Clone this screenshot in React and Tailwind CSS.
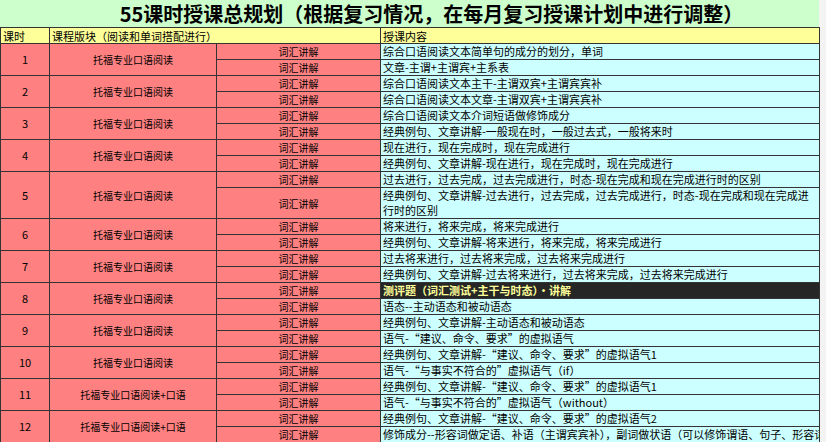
const rows = [
  ["1", "托福专业口语阅读", ["综合口语阅读文本简单句的成分的划分，单词", "文章-主谓+主谓宾+主系表"]],
  ["2", "托福专业口语阅读", ["综合口语阅读文本主干-主谓双宾+主谓宾宾补", "综合口语阅读文本文章-主谓双宾+主谓宾宾补"]],
  ["3", "托福专业口语阅读", ["综合口语阅读文本介词短语做修饰成分", "经典例句、文章讲解-一般现在时，一般过去式，一般将来时"]],
  ["4", "托福专业口语阅读", ["现在进行，现在完成时，现在完成进行", "经典例句、文章讲解-现在进行，现在完成时，现在完成进行"]],
  ["5", "托福专业口语阅读", ["过去进行，过去完成，过去完成进行，时态-现在完成和现在完成进行时的区别", "经典例句、文章讲解-过去进行，过去完成，过去完成进行，时态-现在完成和现在完成进行时的区别"]],
  ["6", "托福专业口语阅读", ["将来进行，将来完成，将来完成进行", "经典例句、文章讲解-将来进行，将来完成，将来完成进行"]],
  ["7", "托福专业口语阅读", ["过去将来进行，过去将来完成，过去将来完成进行", "经典例句、文章讲解-过去将来进行，过去将来完成，过去将来完成进行"]],
  ["8", "托福专业口语阅读", ["测评题（词汇测试+主干与时态）·讲解", "语态--主动语态和被动语态"]],
  ["9", "托福专业口语阅读", ["经典例句、文章讲解-主动语态和被动语态", "语气-“建议、命令、要求”的虚拟语气"]],
  ["10", "托福专业口语阅读", ["经典例句、文章讲解-“建议、命令、要求”的虚拟语气1", "语气-“与事实不符合的”虚拟语气（if）"]],
  ["11", "托福专业口语阅读+口语", ["经典例句、文章讲解-“建议、命令、要求”的虚拟语气1", "语气-“与事实不符合的”虚拟语气（without）"]],
  ["12", "托福专业口语阅读+口语", ["经典例句、文章讲解-“建议、命令、要求”的虚拟语气2", "修饰成分--形容词做定语、补语（主谓宾宾补），副词做状语（可以修饰谓语、句子、形容词"]],
];

const b = "border border-[#333] ";

export default function App() {
  return (
    <div className="w-[826px] h-[442px] overflow-hidden bg-[#f3f3f3] text-[11px] text-black" style={{ fontFamily: '"Noto Sans CJK SC", "Noto Sans", sans-serif' }}>
      <div className="w-[819px] h-[27px] bg-[#ccffcc] flex items-center justify-center pl-[44px] text-[20px] font-bold leading-none">
        55课时授课总规划（根据复习情况，在每月复习授课计划中进行调整）
      </div>
      <table className="w-[819px] border-collapse table-fixed">
        <colgroup>
          <col className="w-[49px]" />
          <col className="w-[167px]" />
          <col className="w-[164px]" />
          <col className="w-[439px]" />
        </colgroup>
        <tbody>
          <tr className="h-[16px] bg-[#ffff99] leading-[14px]">
            <td className={b + "px-[2px]"}>课时</td>
            <td colSpan={2} className={b + "px-[2px]"}>课程版块（阅读和单词搭配进行）</td>
            <td className={b + "px-[2px]"}>授课内容</td>
          </tr>
          {rows.map(([n, mod, items]) =>
            items.map((t, i) => {
              const dark = t.startsWith("测评题");
              const tall = n === "5" && i === 1;
              return (
                <tr key={n + i} className={(tall ? "h-[31px]" : "h-[16px]") + " leading-[15px]"}>
                  {i === 0 && (
                    <td rowSpan={2} className={b + "bg-[#ff8080] text-center"}>{n}</td>
                  )}
                  {i === 0 && (
                    <td rowSpan={2} className={b + "bg-[#ff8080] text-center text-[10px]"}>{mod}</td>
                  )}
                  <td className={b + "bg-[#ff8080] text-center text-[10px]"}>词汇讲解</td>
                  <td className={b + "px-[2px] overflow-hidden " + (tall ? "whitespace-normal " : "whitespace-nowrap ") + (dark ? "bg-[#262626] text-[#ffff99] font-bold" : "bg-[#ccffff]")}>
                    {t}
                  </td>
                </tr>
              );
            })
          )}
        </tbody>
      </table>
    </div>
  );
}
